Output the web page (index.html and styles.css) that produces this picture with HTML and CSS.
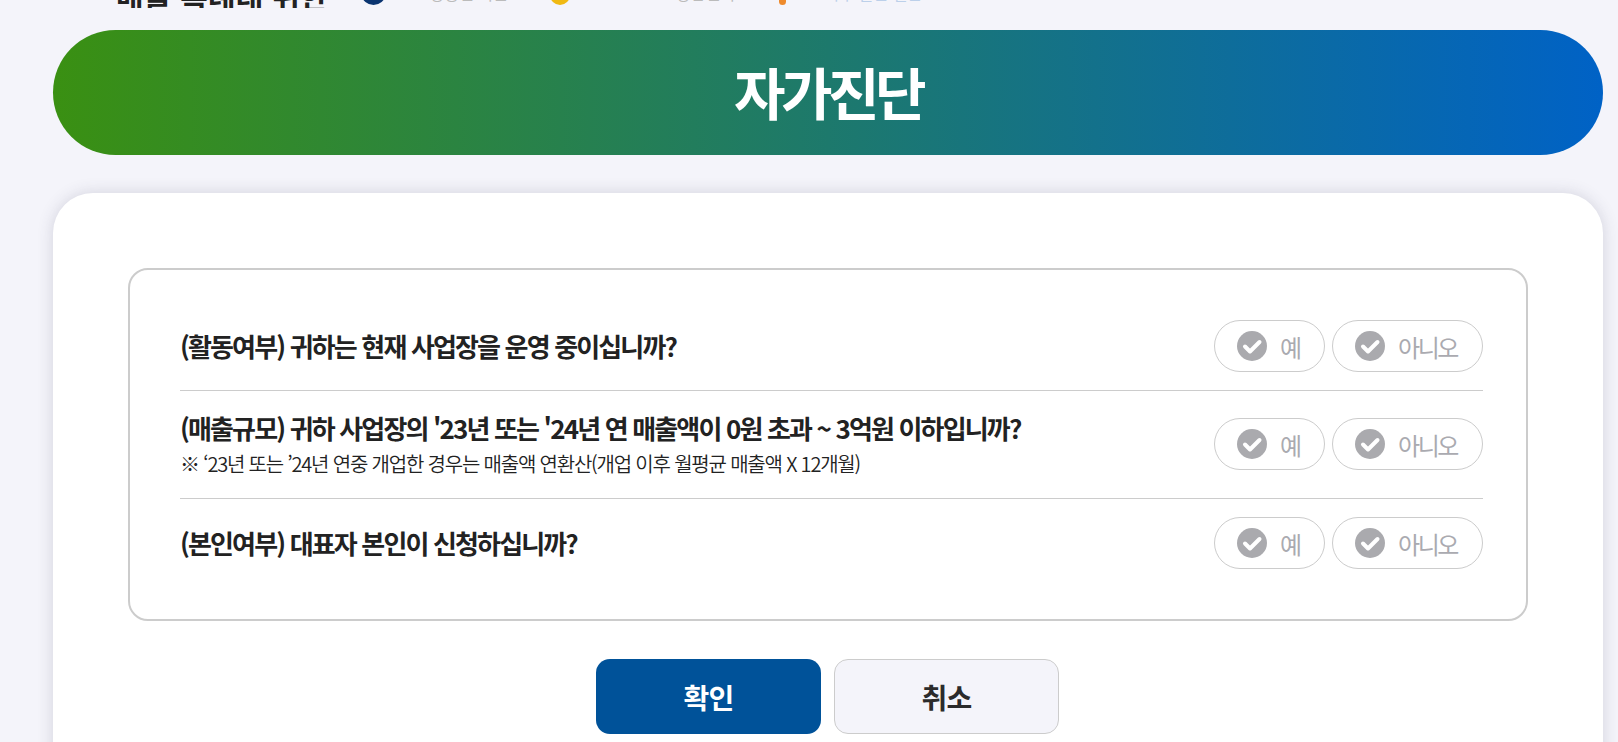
FILE: index.html
```html
<!DOCTYPE html>
<html lang="ko">
<head>
<meta charset="utf-8">
<title>자가진단</title>
<link rel="stylesheet" href="styles.css">
</head>
<body>
<div class="clip">
  <div class="strip">
    <strong class="strip-title">매출 특례대 위한</strong>
    <span class="dot dot-blue"></span><span class="strip-text text-a">소상공인 지원</span>
    <span class="dot dot-yellow"></span><span class="strip-text text-b">1600-0000 상담센터</span>
    <span class="dot dot-orange"></span><span class="strip-text link">자주 묻는 질문</span>
  </div>
</div>
<main class="page">
  <h1 class="banner">자가진단</h1>
  <section class="card">
    <div class="box">
      <div class="row">
        <div class="q"><p class="q-title">(활동여부) 귀하는 현재 사업장을 운영 중이십니까?</p></div>
        <div class="opts">
          <button class="opt opt-yes"><svg class="chk" viewBox="0 0 30 30"><circle cx="15" cy="15" r="15"/><path d="M8 15.500l5 5 9.500-9.500"/></svg>예</button>
          <button class="opt opt-no"><svg class="chk" viewBox="0 0 30 30"><circle cx="15" cy="15" r="15"/><path d="M8 15.500l5 5 9.500-9.500"/></svg>아니오</button>
        </div>
      </div>
      <div class="row row-tall">
        <div class="q">
          <p class="q-title">(매출규모) 귀하 사업장의 '23년 또는 '24년 연 매출액이 0원 초과 ~ 3억원 이하입니까?</p>
          <p class="q-note">※ ‘23년 또는 ’24년 연중 개업한 경우는 매출액 연환산(개업 이후 월평균 매출액 X 12개월)</p>
        </div>
        <div class="opts">
          <button class="opt opt-yes"><svg class="chk" viewBox="0 0 30 30"><circle cx="15" cy="15" r="15"/><path d="M8 15.500l5 5 9.500-9.500"/></svg>예</button>
          <button class="opt opt-no"><svg class="chk" viewBox="0 0 30 30"><circle cx="15" cy="15" r="15"/><path d="M8 15.500l5 5 9.500-9.500"/></svg>아니오</button>
        </div>
      </div>
      <div class="row">
        <div class="q"><p class="q-title">(본인여부) 대표자 본인이 신청하십니까?</p></div>
        <div class="opts">
          <button class="opt opt-yes"><svg class="chk" viewBox="0 0 30 30"><circle cx="15" cy="15" r="15"/><path d="M8 15.500l5 5 9.500-9.500"/></svg>예</button>
          <button class="opt opt-no"><svg class="chk" viewBox="0 0 30 30"><circle cx="15" cy="15" r="15"/><path d="M8 15.500l5 5 9.500-9.500"/></svg>아니오</button>
        </div>
      </div>
    </div>
    <div class="actions">
      <button class="act act-ok">확인</button>
      <button class="act act-cancel">취소</button>
    </div>
  </section>
</main>
</body>
</html>
```
FILE: styles.css
```css
* { box-sizing: border-box; }
html, body { margin: 0; height: 742px; overflow: hidden; }
body {
  background: #f4f4fa;
  font-family: "Noto Sans CJK KR", "Noto Sans", sans-serif;
  color: #222;
}
p, h1 { margin: 0; }
.clip { height: 8px; overflow: hidden; display: flex; align-items: flex-end; padding-left: 116px; }
.strip { display: flex; align-items: center; height: 26px; flex: none; white-space: nowrap; }
.strip-title { font-size: 30px; letter-spacing: .2px; width: 246px; font-weight: 700; color: #222; }
.strip-text { color: #bbb; font-size: 16px; margin-bottom: 5px; }
.text-a { width: 135px; margin-left: 30px; }
.text-b { width: 184px; margin-left: 25px; }
.link { color: #bcd0ea; margin-left: 39px; }
.dot { width: 23px; height: 20px; border-radius: 50%; flex: none; }
.dot-blue { background: #0a3470; }
.dot-yellow { background: #f0b912; width: 20px; }
.dot-orange { width: 7px; background: #ee8a2c; border-radius: 4px; }
.page { padding: 22px 15px 0 53px; }
.banner {
  height: 125px;
  border-radius: 63px;
  background: linear-gradient(90deg, #3a9012, #0062c6);
  color: #fff;
  font-size: 56px;
  font-weight: 700;
  letter-spacing: -4.5px;
  line-height: 121px;
  text-align: center;
}
.card {
  margin-top: 38px;
  height: 620px;
  background: #fff;
  border-radius: 40px;
  box-shadow: 0 0 16px rgba(60, 60, 90, .18);
  padding: 75px 75px 0;
}
.box {
  height: 353px;
  border: 2px solid #ccc;
  border-radius: 20px;
  padding: 32px 43px 32px 50px;
}
.row {
  display: flex;
  align-items: center;
  justify-content: space-between;
  padding: 18px 0;
  border-bottom: 1px solid #ccc;
}
.row-tall { padding-bottom: 19px; }
.row:last-child { border-bottom: 0; }
.q-title { font-size: 26px; font-weight: 700; letter-spacing: -1.85px; line-height: 38px; color: #222; white-space: nowrap; }
.q-note { font-size: 20px; font-weight: 350; letter-spacing: -1.2px; line-height: 30px; color: #222; white-space: nowrap; margin-top: 2px; }
.opts { display: flex; gap: 7px; flex: none; }
.opt {
  display: flex;
  align-items: center;
  height: 52px;
  padding: 0 0 0 22px;
  border: 1px solid #ccc;
  border-radius: 26px;
  background: #fff;
  color: #aaaab0;
  font: 400 24px "Noto Sans CJK KR", sans-serif;
  letter-spacing: -2.4px;
}
.opt-yes { width: 111px; }
.opt-no { width: 151px; }
.chk { width: 30px; height: 30px; margin-right: 13px; flex: none; }
.chk circle { fill: #aaaaae; }
.chk path { fill: none; stroke: #fff; stroke-width: 4; stroke-linecap: round; stroke-linejoin: round; }
.actions { display: flex; justify-content: center; gap: 13px; margin-top: 38px; padding-right: 1px; }
.act {
  width: 225px;
  height: 75px;
  border-radius: 14px;
  font: 700 28px "Noto Sans CJK KR", sans-serif;
  letter-spacing: -.8px;
}
.act-ok { background: #005299; color: #fff; border: 0; }
.act-cancel { background: #f4f4fa; color: #2b2b2b; border: 1px solid #ccc; }
```
